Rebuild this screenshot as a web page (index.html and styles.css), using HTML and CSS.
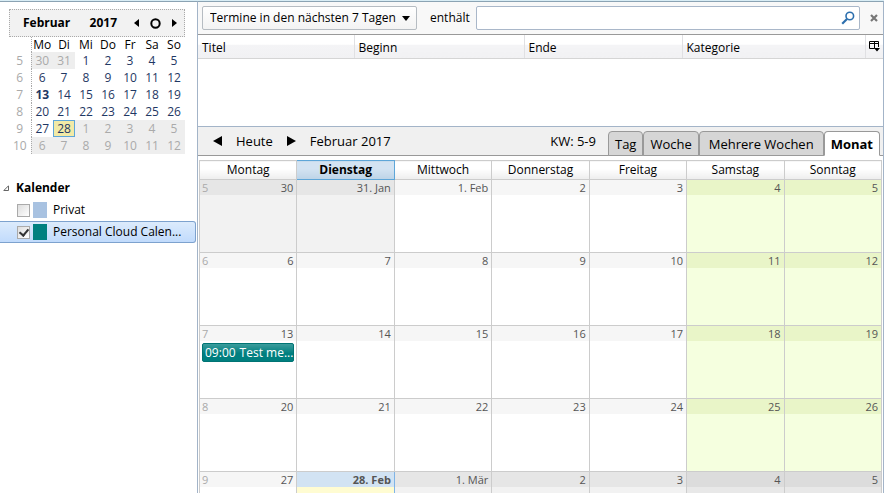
FILE: index.html
```html
<!DOCTYPE html>
<html lang="de">
<head>
<meta charset="utf-8">
<title>Kalender</title>
<link rel="stylesheet" href="styles.css">
</head>
<body>
<div class="app">
  <aside class="sidebar">
    <section class="mini">
      <div class="mini-head">
        <span class="mini-month">Februar</span>
        <span class="mini-year">2017</span>
        <button class="icon-btn" type="button" aria-label="Zurück"><svg width="5" height="8" viewBox="0 0 5 8"><path d="M5 0v8L0 4z"/></svg></button>
        <button class="icon-btn" type="button" aria-label="Heute"><svg width="11" height="11" viewBox="0 0 11 11"><circle cx="5.500" cy="5.500" r="4.200" fill="none" stroke="#000" stroke-width="2"/></svg></button>
        <button class="icon-btn" type="button" aria-label="Weiter"><svg width="5" height="8" viewBox="0 0 5 8"><path d="M0 0v8l5-4z"/></svg></button>
      </div>
      <table class="mini-grid">
        <thead><tr><th class="wk"></th><th>Mo</th><th>Di</th><th>Mi</th><th>Do</th><th>Fr</th><th>Sa</th><th>So</th></tr></thead>
        <tbody>
          <tr><th class="wk">5</th><td class="out">30</td><td class="out">31</td><td>1</td><td>2</td><td>3</td><td>4</td><td>5</td></tr>
          <tr><th class="wk">6</th><td>6</td><td>7</td><td>8</td><td>9</td><td>10</td><td>11</td><td>12</td></tr>
          <tr><th class="wk">7</th><td class="busy">13</td><td>14</td><td>15</td><td>16</td><td>17</td><td>18</td><td>19</td></tr>
          <tr><th class="wk">8</th><td>20</td><td>21</td><td>22</td><td>23</td><td>24</td><td>25</td><td>26</td></tr>
          <tr><th class="wk">9</th><td>27</td><td class="now">28</td><td class="out">1</td><td class="out">2</td><td class="out">3</td><td class="out">4</td><td class="out">5</td></tr>
          <tr><th class="wk">10</th><td class="out">6</td><td class="out">7</td><td class="out">8</td><td class="out">9</td><td class="out">10</td><td class="out">11</td><td class="out">12</td></tr>
        </tbody>
      </table>
    </section>
    <section class="calendars">
      <h2 class="tree-title"><svg width="6" height="6" viewBox="0 0 6 6"><path d="M5.500 .8v4.700H.8z" fill="#fff" stroke="#666"/></svg>Kalender</h2>
      <label class="cal"><input type="checkbox"><span class="swatch privat"></span><span class="cal-name">Privat</span></label>
      <label class="cal selected"><input type="checkbox" checked><span class="swatch cloud"></span><span class="cal-name">Personal Cloud Calen...</span></label>
    </section>
  </aside>

  <main class="content">
    <div class="filter">
      <div class="select-wrap">
        <select aria-label="Zeitraum"><option>Termine in den nächsten 7 Tagen</option></select>
        <svg class="caret" width="8" height="5" viewBox="0 0 8 5"><path d="M0 0h8L4 5z"/></svg>
      </div>
      <label class="contains" for="search">enthält</label>
      <div class="search">
        <input id="search" type="text">
        <svg width="14" height="14" viewBox="0 0 14 14" fill="none" stroke="#2c6fae"><circle cx="8.800" cy="5" r="3.800" stroke-width="1.600"/><path d="M6 8L1.200 12.800" stroke-width="2.200"/></svg>
      </div>
      <button class="icon-btn close" type="button" aria-label="Schließen"><svg width="8" height="8" viewBox="0 0 8 8"><path d="M1 1l6 6M7 1L1 7" stroke="#777" stroke-width="2.200"/></svg></button>
    </div>
    <div class="list">
      <table class="events">
        <thead><tr>
          <th class="c-title">Titel</th><th class="c-begin">Beginn</th><th class="c-end">Ende</th><th class="c-cat">Kategorie</th>
          <th class="c-pick"><button class="icon-btn" type="button" aria-label="Spalten"><svg width="11" height="11" viewBox="0 0 11 11" fill="none" stroke="#000"><path d="M5.500 7.500h-5v-7h9V6M0 2.500h10M5.500 1v6.500"/><path d="M5 7h6L8 10.500z" fill="#000" stroke="none"/></svg></button></th>
        </tr></thead>
      </table>
    </div>
    <nav class="bar">
      <button class="icon-btn" type="button" aria-label="Voriger Monat"><svg width="9" height="10" viewBox="0 0 9 10"><path d="M9 0v10L0 5z"/></svg></button>
      <button class="today-btn" type="button">Heute</button>
      <button class="icon-btn" type="button" aria-label="Nächster Monat"><svg width="9" height="10" viewBox="0 0 9 10"><path d="M0 0v10l9-5z"/></svg></button>
      <span class="range">Februar 2017</span>
      <span class="weeks">KW: 5-9</span>
      <div class="tabs">
        <button class="tab" type="button">Tag</button>
        <button class="tab" type="button">Woche</button>
        <button class="tab wide" type="button">Mehrere Wochen</button>
        <button class="tab active" type="button">Monat</button>
      </div>
    </nav>
    <div class="month-wrap">
      <table class="month">
        <thead><tr><th>Montag</th><th class="current">Dienstag</th><th>Mittwoch</th><th>Donnerstag</th><th>Freitag</th><th>Samstag</th><th>Sonntag</th></tr></thead>
        <tbody>
          <tr><td class="other"><div class="date"><span class="kw">5</span>30</div></td><td class="other"><div class="date">31. Jan</div></td><td><div class="date">1. Feb</div></td><td><div class="date">2</div></td><td><div class="date">3</div></td><td class="off"><div class="date">4</div></td><td class="off"><div class="date">5</div></td></tr>
          <tr><td><div class="date"><span class="kw">6</span>6</div></td><td><div class="date">7</div></td><td><div class="date">8</div></td><td><div class="date">9</div></td><td><div class="date">10</div></td><td class="off"><div class="date">11</div></td><td class="off"><div class="date">12</div></td></tr>
          <tr><td><div class="date"><span class="kw">7</span>13</div><div class="event"><span>09:00</span><span>Test me...</span></div></td><td><div class="date">14</div></td><td><div class="date">15</div></td><td><div class="date">16</div></td><td><div class="date">17</div></td><td class="off"><div class="date">18</div></td><td class="off"><div class="date">19</div></td></tr>
          <tr><td><div class="date"><span class="kw">8</span>20</div></td><td><div class="date">21</div></td><td><div class="date">22</div></td><td><div class="date">23</div></td><td><div class="date">24</div></td><td class="off"><div class="date">25</div></td><td class="off"><div class="date">26</div></td></tr>
          <tr><td><div class="date"><span class="kw">9</span>27</div></td><td class="today"><div class="date">28. Feb</div></td><td class="other"><div class="date">1. Mär</div></td><td class="other"><div class="date">2</div></td><td class="other"><div class="date">3</div></td><td class="other off"><div class="date">4</div></td><td class="other off"><div class="date">5</div></td></tr>
        </tbody>
      </table>
    </div>
  </main>
</div>
</body>
</html>
```
FILE: styles.css
```css
* { box-sizing: border-box; }
body {
  margin: 0;
  font: 12px/16px "Open Sans", "Noto Sans", sans-serif;
  color: #000;
  background: #fff;
}
button, input, select { font: inherit; color: inherit; }
svg { display: block; }
table { border-spacing: 0; border-collapse: collapse; }
th { font-weight: 400; }
.icon-btn { padding: 0; border: 0; background: none; }

.app {
  display: flex;
  height: 100vh;
  overflow: hidden;
  border-top: 1px solid #d9edf5;
}
.sidebar {
  flex: 0 0 198px;
  border-top: 1px solid #8ba3b3;
  border-right: 1px solid #a3b4c8;
}
.content {
  flex: 1;
  min-width: 0;
  display: flex;
  flex-direction: column;
  border-top: 1px solid #8ba3b3;
  border-right: 1px solid #a3b4c8;
}

/* Mini month */
.mini { width: 176px; margin: 7px 0 0 9px; }
.mini-head {
  display: flex;
  align-items: center;
  height: 28px;
  padding: 0 7px 0 13px;
  border: 1px dotted #aaa;
  background: #f2f2f2;
  font-weight: 700;
}
.mini-month { flex: 1; }
.mini-year { margin-right: 17px; }
.mini-head .icon-btn + .icon-btn { margin-left: 11px; }
.mini-grid { width: 100%; table-layout: fixed; line-height: 17px; text-align: center; }
.mini-grid th, .mini-grid td { width: 22px; height: 17px; padding: 0; }
.mini-grid thead th { height: 15px; line-height: 15px; }
.mini-grid .wk { color: #aaa; border-right: 1px dotted #aaa; }
.mini-grid td { color: #1f3864; }
.mini-grid .out { background: #eee; color: #aaa; }
.mini-grid .busy { font-weight: 700; }
.mini-grid .now { background: #f2eaa6; box-shadow: inset 0 0 0 1px #5ea6d8; }

/* Calendar list */
.calendars { margin-top: 23px; padding-right: 1px; }
.tree-title {
  display: flex;
  align-items: center;
  gap: 7px;
  height: 22px;
  margin: 0;
  padding-left: 3px;
  font-size: 12px;
}
.cal {
  display: flex;
  align-items: center;
  height: 22px;
  padding-left: 17px;
  border: 1px solid transparent;
  border-left: 0;
}
.cal.selected {
  border-color: #7da2ce;
  border-radius: 0 3px 3px 0;
  background: linear-gradient(#dcebfc, #c1dbfc);
}
.cal input {
  appearance: none;
  display: grid;
  place-items: center;
  width: 13px;
  height: 13px;
  margin: 0;
  border: 1px solid #aaa;
  background: linear-gradient(135deg, #ddd, #fff);
}
.cal input:checked::before {
  content: "";
  width: 4px;
  height: 7px;
  margin-bottom: 2px;
  border: solid #333;
  border-width: 0 2px 2px 0;
  transform: rotate(40deg);
}
.swatch { width: 14px; height: 16px; margin: 0 6px 0 3px; }
.privat { background: #a8c2e1; }
.cloud { background: #008080; }

/* Filter bar */
.filter {
  display: flex;
  align-items: center;
  flex: none;
  height: 33px;
  padding: 0 5px 0 4px;
  border-bottom: 1px solid #999;
  background: #f8f8f8;
}
.select-wrap { display: grid; align-items: center; width: 215px; }
.select-wrap > * { grid-area: 1 / 1; }
.select-wrap select {
  appearance: none;
  height: 24px;
  padding: 0 7px;
  border: 1px solid #b6bcc2;
  border-radius: 2px;
  background: linear-gradient(#fff, #f3f3f3);
}
.caret { justify-self: end; margin-right: 7px; pointer-events: none; }
.contains { margin: 0 6px 0 13px; }
.search {
  display: flex;
  align-items: center;
  flex: 1;
  height: 24px;
  padding-right: 4px;
  border: 1px solid #a9b7c9;
  border-radius: 2px;
  background: #fff;
}
.search input { flex: 1; min-width: 0; border: 0; outline: 0; background: none; }
.close { margin-left: 10px; }

/* Event list */
.list { flex: 0 0 92px; border-bottom: 1px solid #a3b4c8; }
.events { width: 100%; table-layout: fixed; text-align: left; }
.events th {
  height: 23px;
  padding: 3px 4px 0;
  border-right: 1px solid #e0e0e3;
  border-bottom: 1px solid #d5d5d5;
  background: linear-gradient(#fff 40%, #f4f4f6 45%, #f1f1f3);
}
.events th:last-child { border-right: 0; }
.events .c-title { width: 156px; }
.events .c-begin { width: 170px; }
.events .c-end { width: 158px; }
.events .c-pick { width: 18px; padding: 0 3px; }
.c-pick .icon-btn { display: block; }

/* Navigation bar */
.bar {
  display: flex;
  align-items: center;
  flex: none;
  height: 29px;
  padding: 0 3px 0 15px;
  border-bottom: 1px solid #999;
  background: #f0f0f0;
  font-size: 13px;
  white-space: nowrap;
}
.today-btn { margin: 0 14px; padding: 0; border: 0; background: none; }
.range { flex: 1; margin-left: 14px; }
.weeks { margin-right: 12px; }
.tabs { display: flex; align-self: stretch; padding-top: 4px; margin-bottom: -1px; }
.tab {
  padding: 0 6px;
  border: 1px solid #999;
  border-radius: 4px 4px 0 0;
  background: #d6d6d6;
}
.tab.wide { padding: 0 9px; }
.tab.active { border-bottom-color: #fff; background: #fff; font-weight: 700; }

/* Month view */
.month-wrap { padding: 4px 1px 0; }
.month { width: 100%; table-layout: fixed; }
.month th, .month td { border: 1px solid #ccc; padding: 0; }
.month th { height: 19px; background: linear-gradient(#fff 40%, #ededed); }
.month th.current {
  border: 1px solid #5ea6d8;
  background: linear-gradient(#d3e3f2 40%, #bcd3e7);
  font-weight: 700;
}
.month td { height: 73px; vertical-align: top; background: #fff; }
.date {
  display: flex;
  justify-content: flex-end;
  height: 15px;
  padding: 0 3px 0 2px;
  background: #f6f6f6;
  color: #555;
  font-size: 11px;
  line-height: 16px;
}
.kw { margin-right: auto; color: #aaa; }
.month .other { background: #f2f2f2; }
.other .date { background: #e6e6e6; }
.month .off { background: #f5ffdf; }
.off .date { background: #e9f5c8; }
.month .other.off { background: #e8e8e8; }
.other.off .date { background: #dcdcdc; }
.month .today { background: #fffcd2; border: 1px solid #7fb4e6; }
.today .date { background: #d2e3f3; font-weight: 700; }
.event {
  display: flex;
  gap: 4px;
  height: 19px;
  margin: 2px;
  padding: 0 2px;
  border: 1px solid #007474;
  border-radius: 2px;
  background: linear-gradient(#3c9c9c, #007f7f 55%);
  color: #fff;
  line-height: 18px;
  white-space: nowrap;
}
```
